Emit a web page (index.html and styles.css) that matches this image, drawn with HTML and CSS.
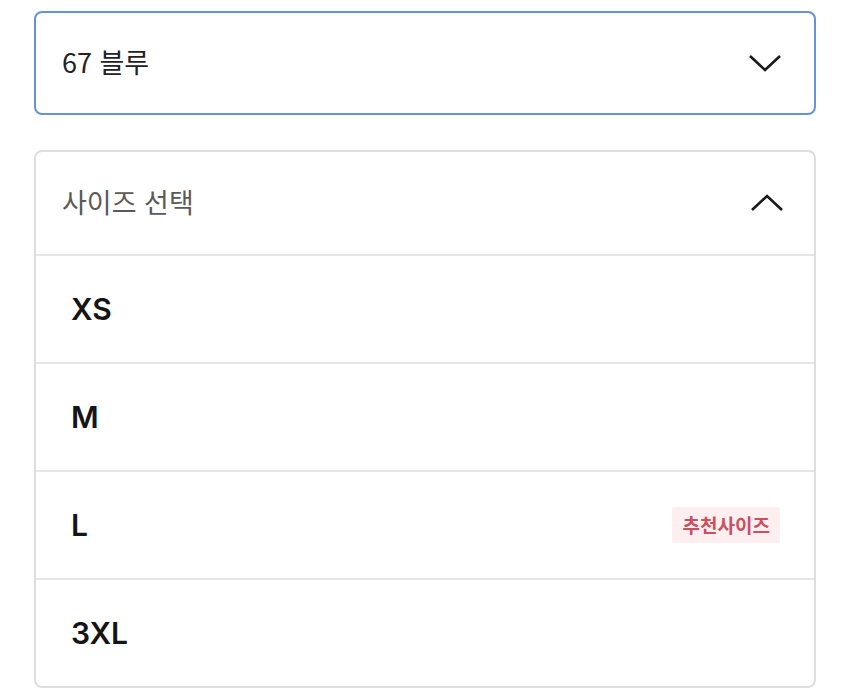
FILE: index.html
```html
<!DOCTYPE html>
<html lang="ko">
<head>
    <meta charset="UTF-8">
    <meta name="viewport" content="width=device-width, initial-scale=1.0">
    <title>옵션 선택</title>
    <link rel="stylesheet" href="styles.css">
</head>
<body>
    <div class="select-box">
        <span class="select-value">67 블루</span>
        <svg class="chevron" width="34" height="20" viewBox="0 0 34 20">
            <polyline points="2,3 17,17 32,3" fill="none" stroke="#1a1a1a" stroke-width="2.6"/>
        </svg>
    </div>

    <div class="size-list">
        <div class="size-header">
            <span class="size-title">사이즈 선택</span>
            <svg class="chevron" width="34" height="20" viewBox="0 0 34 20">
                <polyline points="2,17 17,3 32,17" fill="none" stroke="#1a1a1a" stroke-width="2.6"/>
            </svg>
        </div>
        <div class="size-item"><span>XS</span></div>
        <div class="size-item"><span>M</span></div>
        <div class="size-item">
            <span>L</span>
            <span class="badge">추천사이즈</span>
        </div>
        <div class="size-item"><span>3XL</span></div>
    </div>
</body>
</html>
```

FILE: styles.css
```css
body {
    margin: 0;
    padding: 11px 34px 0 34px;
    background-color: #ffffff;
    font-family: Inter, "Noto Sans CJK KR", sans-serif;
}

.select-box {
    display: flex;
    align-items: center;
    justify-content: space-between;
    height: 100px;
    padding: 0 32px 0 26px;
    border: 2px solid #6593d6;
    border-radius: 8px;
}

.select-value {
    font-family: "Noto Sans CJK KR", sans-serif;
    font-size: 27px;
    color: #222222;
    margin-top: -3px;
}

.size-list {
    margin-top: 35px;
    border: 2px solid #dedede;
    border-radius: 8px;
}

.size-header {
    display: flex;
    align-items: center;
    justify-content: space-between;
    height: 102px;
    padding: 0 30px 0 26px;
}

.size-title {
    font-family: "Noto Sans CJK KR", sans-serif;
    font-size: 27px;
    color: #5a5a5a;
    margin-top: -4px;
}

.size-item {
    display: flex;
    align-items: center;
    justify-content: space-between;
    height: 106px;
    padding: 0 34px 0 35px;
    border-top: 2px solid #e6e6e6;
    font-size: 30px;
    font-weight: 600;
    color: #151515;
}

.badge {
    background-color: #fdeef0;
    color: #c9505f;
    font-family: "Noto Sans CJK KR", sans-serif;
    font-size: 19px;
    font-weight: bold;
    padding: 4px 10px 5px 11px;
    border-radius: 2px;
}
```
